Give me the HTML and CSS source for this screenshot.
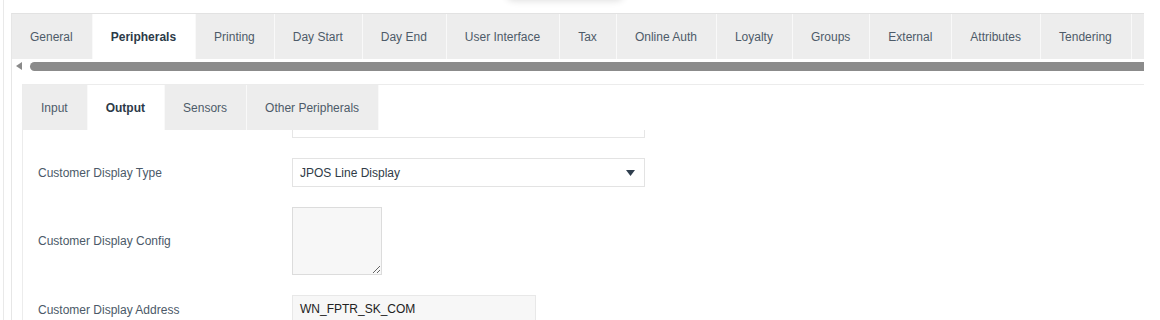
FILE: index.html
```html
<!DOCTYPE html>
<html lang="en">
<head>
<meta charset="utf-8">
<title>Peripherals - Output</title>
<link rel="stylesheet" href="styles.css">
</head>
<body>
<div class="page">
  <div class="popup-shadow"></div>
  <div class="frame">
    <div class="settings">
      <div class="tabs">
        <div class="tab">General</div>
        <div class="tab active">Peripherals</div>
        <div class="tab">Printing</div>
        <div class="tab">Day Start</div>
        <div class="tab">Day End</div>
        <div class="tab">User Interface</div>
        <div class="tab">Tax</div>
        <div class="tab">Online Auth</div>
        <div class="tab">Loyalty</div>
        <div class="tab">Groups</div>
        <div class="tab">External</div>
        <div class="tab">Attributes</div>
        <div class="tab">Tendering</div>
        <div class="tab tab-more"></div>
      </div>
      <div class="scroller">
        <span class="scroll-arrow"></span>
        <span class="scroll-thumb"></span>
      </div>
      <div class="panel">
        <div class="tabs">
          <div class="tab">Input</div>
          <div class="tab active">Output</div>
          <div class="tab">Sensors</div>
          <div class="tab">Other Peripherals</div>
        </div>
        <div class="content">
          <div class="form">
            <div class="label"></div>
            <div class="control"><div class="field wide"></div></div>

            <div class="label">Customer Display Type</div>
            <div class="control">
              <div class="select">
                <span>JPOS Line Display</span>
                <svg class="caret" width="9" height="6" viewBox="0 0 9 6"><path d="M0 0H9L4.5 6Z" fill="#2f3e4e"/></svg>
              </div>
            </div>

            <div class="label">Customer Display Config</div>
            <div class="control"><textarea class="textarea"></textarea></div>

            <div class="label">Customer Display Address</div>
            <div class="control"><div class="field addr">WN_FPTR_SK_COM</div></div>
          </div>
        </div>
      </div>
    </div>
  </div>
</div>
</body>
</html>
```

FILE: styles.css
```css
* { box-sizing: border-box; }

body {
  margin: 0;
  background: #fff;
  font-family: "Liberation Sans", Arial, sans-serif;
  font-size: 12px;
  color: #4b5968;
}

.page {
  position: relative;
  height: 320px;
  overflow: hidden;
  padding-left: 3px;
}

.popup-shadow {
  position: absolute;
  top: -34px;
  left: 506px;
  width: 118px;
  height: 34px;
  border-radius: 8px;
  background: #fff;
  box-shadow: 0 1px 7px rgba(0, 0, 0, 0.13);
}

.frame {
  border-left: 1px solid #e9e9e9;
  padding: 13px 0 0 7px;
  min-height: 320px;
}

.settings {
  width: 1133px;
  border-left: 1px solid #e6e6e6;
  border-top: 1px solid #e2e2e2;
  overflow: hidden;
  min-height: 320px;
}

.tabs {
  display: flex;
  height: 45px;
}

.tab {
  flex: none;
  display: flex;
  align-items: center;
  padding: 0 19px 0 18px;
  background: #ededed;
  border-right: 1px solid #f9f9f9;
  white-space: nowrap;
  color: #4d5b69;
}

.tab.active {
  background: #fff;
  font-weight: bold;
  color: #2c3a48;
}

.tab-more {
  width: 80px;
}

.scroller {
  display: flex;
  align-items: flex-start;
  height: 25px;
  padding-top: 3px;
}

.scroll-arrow {
  flex: none;
  width: 0;
  height: 0;
  margin: 0 0 0 4px;
  border-top: 4px solid transparent;
  border-bottom: 4px solid transparent;
  border-right: 6px solid #8a8a8a;
}

.scroll-thumb {
  flex: none;
  width: 1200px;
  height: 9px;
  margin-left: 8px;
  border-radius: 5px;
  background: #8b8b8b;
}

.panel {
  margin-left: 10px;
  border-top: 1px solid #ececec;
  border-left: 1px solid #ececec;
}

.content {
  height: 200px;
  overflow: hidden;
  padding-left: 15px;
}

.form {
  display: grid;
  grid-template-columns: 254px auto;
  row-gap: 20px;
  align-items: center;
  margin-top: -21px;
}

.label {
  color: #4b5968;
}

.control {
  display: flex;
}

.field {
  height: 29px;
  border: 1px solid #e6e6e6;
  background: #fff;
}

.field.wide {
  width: 353px;
}

.select {
  display: flex;
  align-items: center;
  justify-content: space-between;
  width: 353px;
  height: 29px;
  padding: 0 9px 0 7px;
  border: 1px solid #e3e3e3;
  background: #fff;
  color: #2f3b47;
}

.caret {
  display: block;
}

.textarea {
  display: block;
  width: 90px;
  height: 68px;
  margin: 0;
  border: 1px solid #dcdcdc;
  background: #f7f7f7;
  resize: both;
  font: inherit;
}

.field.addr {
  width: 244px;
  background: #f7f7f7;
  border-color: #e8e8e8;
  padding: 6px 0 0 7px;
  color: #222;
}
```
